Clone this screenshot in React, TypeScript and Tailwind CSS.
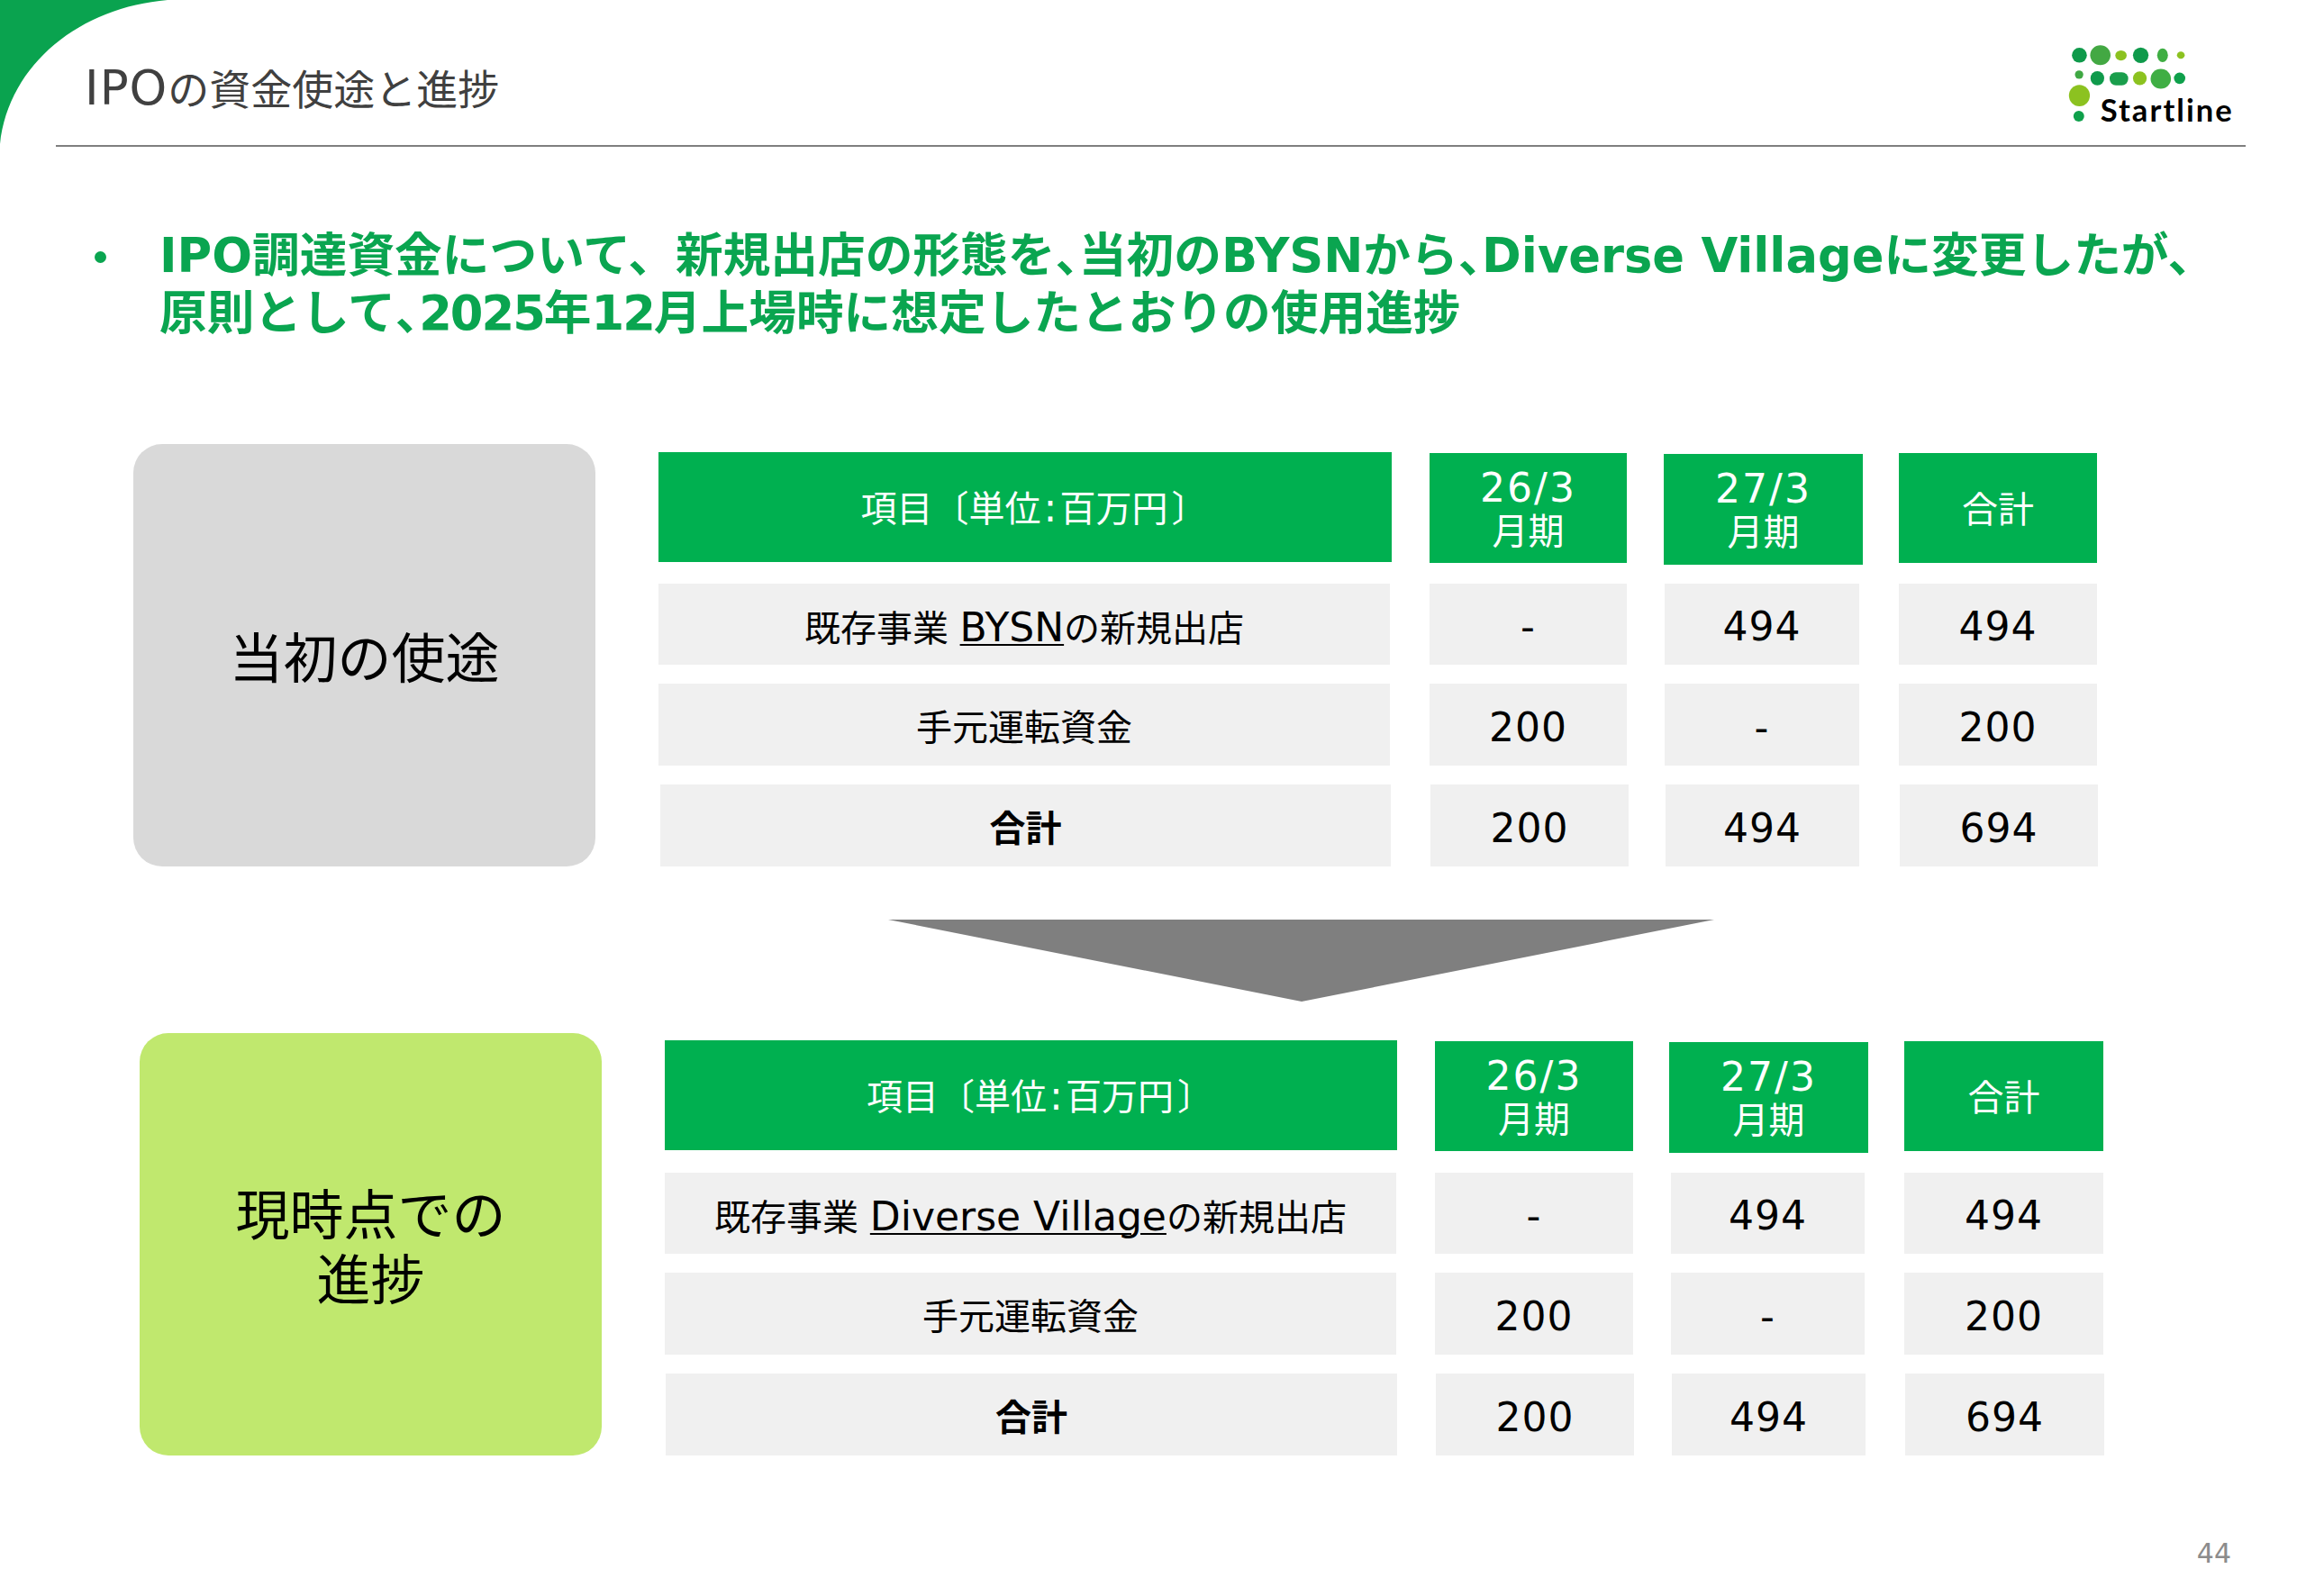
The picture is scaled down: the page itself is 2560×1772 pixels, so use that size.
const jp = "font-['DejaVu_Sans','Noto_Sans_CJK_JP',sans-serif]";

type Layout = {
  top: string;
  head: string[];
  rows: string[][];
};

const first: Layout = {
  top: "pt-[9px]",
  head: [
    "w-[814px] h-[122px]",
    "ml-[42px] mt-[1px] w-[219px] h-[122px]",
    "ml-[41px] mt-[2px] w-[221px] h-[123px]",
    "ml-[40px] mt-[1px] w-[220px] h-[122px]",
    "h-[146px]",
  ],
  rows: [
    ["w-[812px]", "ml-[44px] w-[219px]", "ml-[42px] w-[216px]", "ml-[44px] w-[220px]", "h-[90px]"],
    ["w-[812px]", "ml-[44px] w-[219px]", "ml-[42px] w-[216px]", "ml-[44px] w-[220px]", "mt-[21px] h-[91px]"],
    ["ml-[2px] w-[811px]", "ml-[44px] w-[220px]", "ml-[41px] w-[215px]", "ml-[45px] w-[220px]", "mt-[21px] h-[91px]"],
  ],
};

const second: Layout = {
  top: "pt-[8px]",
  head: [
    "w-[813px] h-[122px]",
    "ml-[42px] mt-[1px] w-[220px] h-[122px]",
    "ml-[40px] mt-[2px] w-[221px] h-[123px]",
    "ml-[40px] mt-[1px] w-[221px] h-[122px]",
    "h-[147px]",
  ],
  rows: [
    ["w-[812px]", "ml-[43px] w-[220px]", "ml-[42px] w-[215px]", "ml-[44px] w-[221px]", "h-[90px]"],
    ["w-[812px]", "ml-[43px] w-[220px]", "ml-[42px] w-[215px]", "ml-[44px] w-[221px]", "mt-[21px] h-[91px]"],
    ["ml-[1px] w-[812px]", "ml-[43px] w-[220px]", "ml-[42px] w-[215px]", "ml-[44px] w-[221px]", "mt-[21px] h-[91px]"],
  ],
};

function HeadCell({ className, children }: { className: string; children: React.ReactNode }) {
  return (
    <div className={`${className} flex flex-col items-center justify-center bg-[#00b050] pt-[3px] text-[40px] leading-[48px] text-white`}>
      {children}
    </div>
  );
}

function Period({ label }: { label: string }) {
  return (
    <>
      <span className="text-[44px] leading-[48px] tracking-[2px]">{label}</span>
      <span className="text-[40px] leading-[48px]">月期</span>
    </>
  );
}

function BodyRow({ layout, label, values }: { layout: string[]; label: React.ReactNode; values: string[] }) {
  return (
    <div className={`flex ${layout[4]}`}>
      <div className={`${layout[0]} flex items-center justify-center bg-[#f0f0f0] pt-[7px] text-[40px] text-black`}>{label}</div>
      {values.map((v, i) => (
        <div key={i} className={`${layout[i + 1]} flex items-center justify-center bg-[#f0f0f0] pt-[6px] text-[44px] tracking-[1px] text-black`}>
          {v}
        </div>
      ))}
    </div>
  );
}

function Section({
  className,
  boxColor,
  title,
  shop,
  layout,
}: {
  className: string;
  boxColor: string;
  title: React.ReactNode;
  shop: string;
  layout: Layout;
}) {
  return (
    <section className={`flex ${className}`}>
      <div className={`${boxColor} flex h-[469px] w-[513px] items-center justify-center rounded-[32px] pt-[9px] text-center text-[60px] leading-[72px] text-black`}>
        {title}
      </div>
      <div className={`ml-[70px] flex flex-col ${layout.top}`}>
        <div className={`flex items-start ${layout.head[4]}`}>
          <HeadCell className={layout.head[0]}>
            <span className="pl-[20px] whitespace-pre">
              項目〔単位<span className="mx-[3px] text-[44px]">:</span>百万円<span className="ml-[4px]">〕</span>
            </span>
          </HeadCell>
          <HeadCell className={layout.head[1]}>
            <Period label="26/3" />
          </HeadCell>
          <HeadCell className={layout.head[2]}>
            <Period label="27/3" />
          </HeadCell>
          <HeadCell className={layout.head[3]}>
            <span>合計</span>
          </HeadCell>
        </div>
        <BodyRow
          layout={layout.rows[0]}
          values={["-", "494", "494"]}
          label={
            <span className="whitespace-pre">
              既存事業 <span className="text-[44px] underline decoration-2 underline-offset-[3px]">{shop}</span>の新規出店
            </span>
          }
        />
        <BodyRow layout={layout.rows[1]} values={["200", "-", "200"]} label="手元運転資金" />
        <BodyRow layout={layout.rows[2]} values={["200", "494", "694"]} label={<span className="font-bold">合計</span>} />
      </div>
    </section>
  );
}

function Logo() {
  return (
    <svg viewBox="150 80 580 280" className="mt-[47px] mr-[10px] h-[93px] w-[193px] overflow-visible">
      <circle cx="205" cy="123" r="25" fill="#0f9a4b" />
      <ellipse cx="275" cy="123" rx="34" ry="33" fill="#43a843" />
      <ellipse cx="344" cy="124" rx="19" ry="17" fill="#8cc220" />
      <circle cx="410" cy="123" r="26" fill="#0f9a4b" />
      <ellipse cx="483" cy="123" rx="18" ry="23" fill="#3fae43" />
      <ellipse cx="544" cy="123" rx="13" ry="12" fill="#8cc220" />
      <circle cx="204" cy="188" r="14" fill="#3fa843" />
      <ellipse cx="265" cy="200" rx="23" ry="24" fill="#0f9a4b" />
      <rect x="306" y="180" width="62" height="44" rx="21" fill="#1a9e4c" />
      <circle cx="407" cy="200" r="23" fill="#8cc220" />
      <ellipse cx="477" cy="202" rx="34" ry="33" fill="#3fae43" />
      <circle cx="540" cy="200" r="19" fill="#0fa04b" />
      <ellipse cx="205" cy="258" rx="35" ry="36" fill="#8cc220" />
      <circle cx="203" cy="327" r="18" fill="#0fa04b" />
      <text x="275" y="345" textLength="440" fontFamily="Lato, sans-serif" fontWeight="700" fontSize="104" fill="#000">
        Startline
      </text>
    </svg>
  );
}

export default function App() {
  const halt = "[font-feature-settings:'halt']";

  return (
    <div className={`${jp} relative h-[1772px] w-[2560px] overflow-hidden bg-white`}>
      <svg viewBox="0 0 186 160" className="absolute top-0 left-0 h-[160px] w-[186px]">
        <path d="M0 0H186C90 8 10 70 0 160Z" fill="#0aa34f" />
      </svg>

      <header className="mr-[67px] ml-[62px] flex h-[163px] items-start justify-between border-b-2 border-[#7f7f7f]">
        <h1 className="mt-[68px] pl-[32px] text-[46px] leading-[60px] font-normal text-[#404040]">
          <span className="text-[53px] tracking-[1px]">IPO</span>の資金使途と進捗
        </h1>
        <Logo />
      </header>

      <div className="mt-[89px] flex pl-[105px]">
        <div className="mt-[27px] h-[13px] w-[13px] rounded-full bg-[#0aa550]" />
        <div className="ml-[59px] text-[52.7px] leading-[64px] font-bold whitespace-nowrap text-[#0aa550]">
          <div>
            IPO調達資金について、新規出店の形態を<span className={halt}>、</span>当初のBYSNから
            <span className={halt}>、</span>Diverse Villageに変更したが、
          </div>
          <div>
            原則として<span className={halt}>、</span>
            <span className="tracking-[-2px]">2025</span>年<span className="tracking-[-2px]">12</span>月上場時に想定したとおりの使用進捗
          </div>
        </div>
      </div>

      <Section
        className="mt-[113px] ml-[148px]"
        boxColor="bg-[#d9d9d9]"
        title="当初の使途"
        shop="BYSN"
        layout={first}
      />

      <svg viewBox="0 0 917 91" className="mt-[59px] ml-[986px] h-[91px] w-[917px]">
        <polygon points="0,0 917,0 459,91" fill="#7f7f7f" />
      </svg>

      <Section
        className="mt-[35px] ml-[155px]"
        boxColor="bg-[#c0e86e]"
        title={
          <span>
            現時点での
            <br />
            進捗
          </span>
        }
        shop="Diverse Village"
        layout={second}
      />

      <div className="mt-[94px] mr-[83px] text-right text-[30px] leading-[30px] text-[#8c8c8c]">44</div>
    </div>
  );
}
